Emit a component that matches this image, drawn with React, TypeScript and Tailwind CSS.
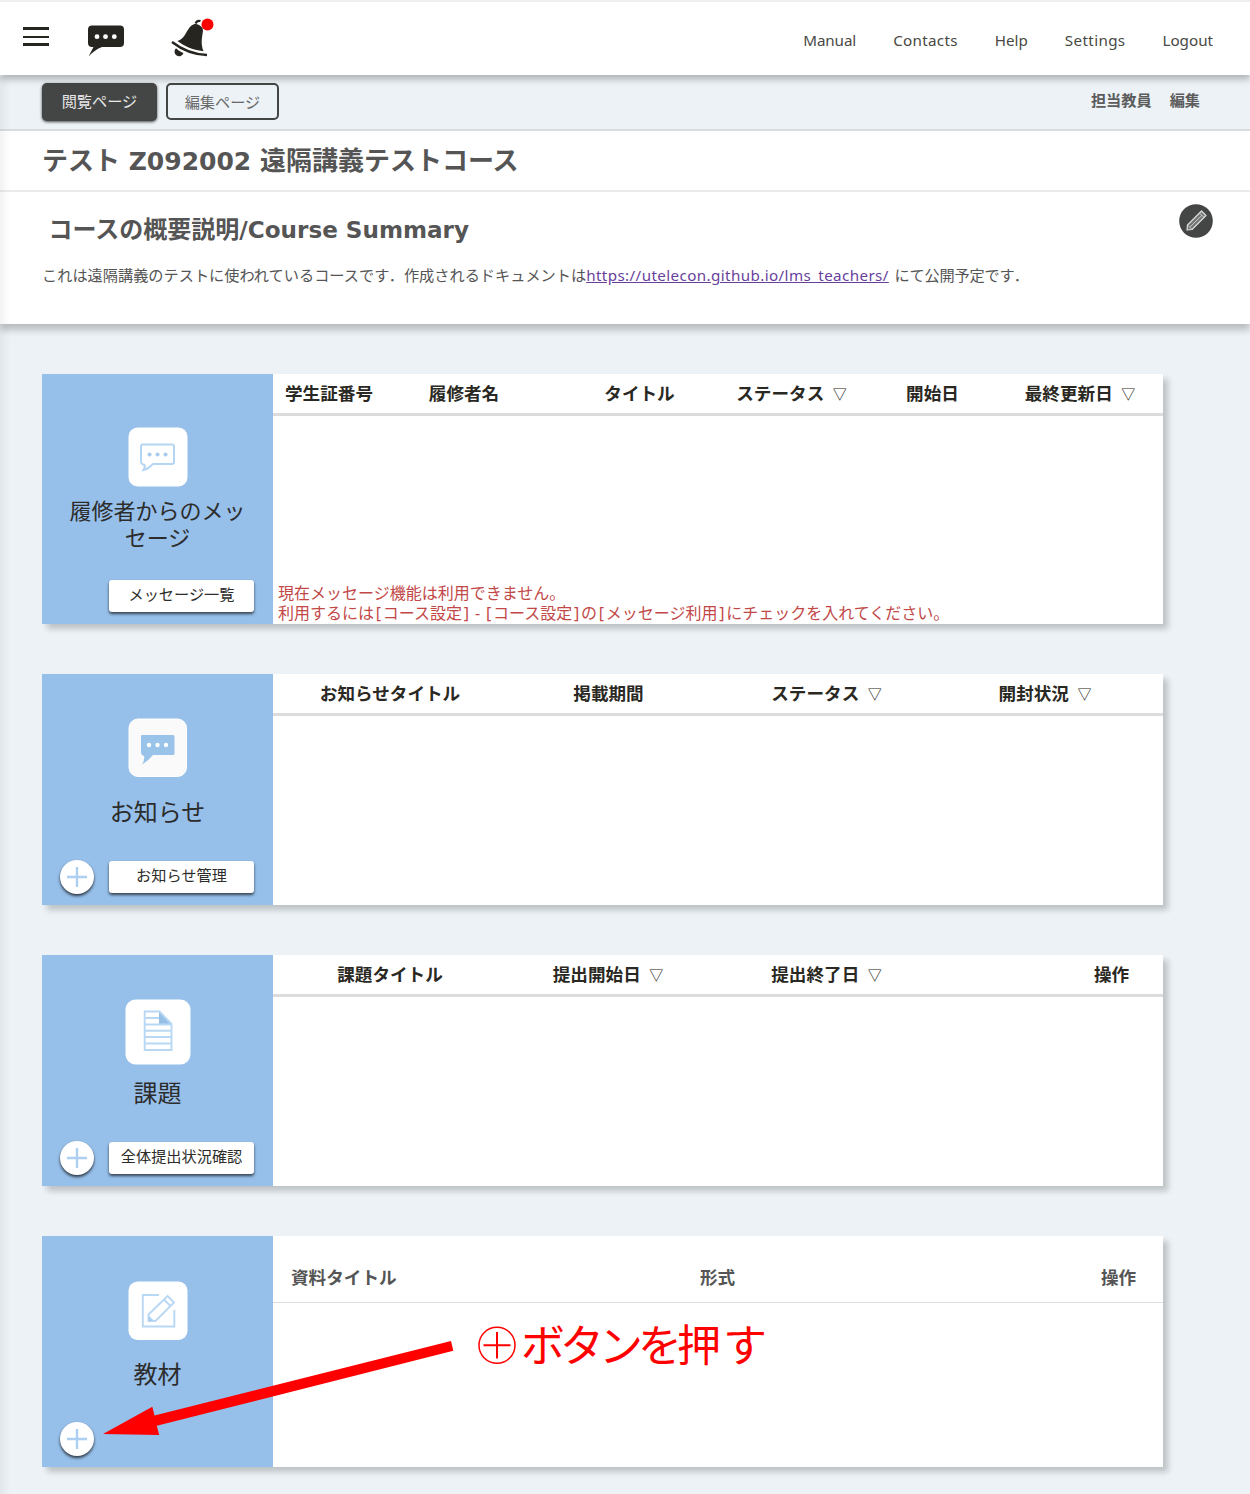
import React from "react";

type Column = { label: string; width: string; sort?: boolean };

const CJK = "font-['Noto_Sans','Noto_Sans_CJK_JP',sans-serif]";
const HEADING = "font-['DejaVu_Sans','Noto_Sans_CJK_JP',sans-serif]";

function Triangle() {
  return <span className="relative -top-px ml-[8.500px] font-['Noto_Sans_CJK_JP',sans-serif] text-[14px] font-medium">▽</span>;
}

function ChatIcon() {
  return (
    <svg className="h-[34px] w-[38px]" viewBox="0 0 38 34" fill="#262520">
      <path d="M5 .5h28q4 0 4 4v13.500q0 4-4 4H15C10 23.500 6 27 1.500 31.500 3 28.500 5 25 6.500 22H5q-4 0-4-4V4.500q0-4 4-4Z" />
      <circle cx="10" cy="11.700" r="2.400" fill="#fff" />
      <circle cx="18.500" cy="11.700" r="2.400" fill="#fff" />
      <circle cx="27.300" cy="11.700" r="2.400" fill="#fff" />
    </svg>
  );
}

function BellIcon() {
  return (
    <svg className="h-[42px] w-[46px]" viewBox="170 17 46 42">
      <path d="M195.500 23.500q1.500-3.500 5-2.500" fill="none" stroke="#262520" strokeWidth="2.200" />
      <path d="M202.500 28C199 24 195 22.500 191.500 25.500C186 30 186 38 177.500 41C184 46 192 50 203.500 51.200C200.500 44 202 37 203 31Z" fill="#262520" />
      <path d="M172 42C181 49 192 54.500 207 55" fill="none" stroke="#262520" strokeWidth="2.500" />
      <path d="M176 48.200Q181 52.500 183.500 52.900A4.600 4.600 0 1 1 176 48.200Z" fill="#262520" />
      <circle cx="207.500" cy="24.500" r="6" fill="#f00" />
    </svg>
  );
}

function MessageTile() {
  return (
    <svg className="size-[60px]" viewBox="0 0 60 60">
      <rect x=".5" y=".5" width="59" height="59" rx="9" fill="#fff" />
      <path d="M15 17.500h29q2 0 2 2V35q0 2-2 2H25Q20 42 15.500 43Q17.500 40 16.500 38Q13 37 13 35V19.500q0-2 2-2Z" fill="none" stroke="#b5d6f3" strokeWidth="2" />
      <g fill="#aacdee">
        <circle cx="21.500" cy="27.500" r="2.100" />
        <circle cx="29.500" cy="27.500" r="2.100" />
        <circle cx="37.500" cy="27.500" r="2.100" />
      </g>
    </svg>
  );
}

function NewsTile() {
  return (
    <svg className="size-[60px]" viewBox="0 0 60 60">
      <rect x="1" y="1" width="57.500" height="57.500" rx="9" fill="#fafafa" stroke="#fff" />
      <path d="M14 17h31q1.500 0 1.500 1.500v17q0 1.500-1.500 1.500H25Q20 43 14 46.500Q17 42 16 38Q13 37 13 35V18q0-1 1-1Z" fill="#9ac3ea" />
      <g fill="#fff">
        <circle cx="21" cy="27" r="2.200" />
        <circle cx="29.500" cy="27" r="2.200" />
        <circle cx="38" cy="27" r="2.200" />
      </g>
    </svg>
  );
}

function ReportTile() {
  return (
    <svg className="size-[66px]" viewBox="0 0 66 66">
      <rect x=".5" y=".5" width="65" height="65" rx="10" fill="#fff" />
      <path d="M34 12.500L46.500 25H34Z" fill="#96bfe8" />
      <path d="M19.700 12.500H34.500L46.500 25V51H19.700ZM19.700 19H34M19.700 25.500H46M19.700 31.700h26.800M19.700 38h26.800M19.700 44.500h26.800" fill="none" stroke="#b9d8f4" strokeWidth="1.900" />
    </svg>
  );
}

function MaterialTile() {
  return (
    <svg className="size-[60px]" viewBox="0 0 60 60">
      <rect x=".5" y=".5" width="59" height="58.500" rx="9" fill="#fff" />
      <g fill="none" stroke="#b9d8f4" strokeWidth="1.900">
        <path d="M31 14H14.800v31.500h31.500V29" />
        <path d="M39.500 15L46 21.500L27.500 40H20.500V33.500ZM36 18.500L42.500 25M20.500 35.500L25 40" />
      </g>
      <path d="M20.500 36L24.500 40h-4Z" fill="#a9cdef" />
    </svg>
  );
}

function PlusButton() {
  return (
    <button aria-label="追加" className="flex size-[34px] items-center justify-center rounded-full bg-white shadow-[0_2px_3px_rgba(0,0,0,.7)]">
      <svg className="size-[22px]" viewBox="0 0 22 22">
        <path d="M1 11h20M11 1v20" stroke="#add0f2" strokeWidth="2.400" />
      </svg>
    </button>
  );
}

function PencilButton() {
  return (
    <button aria-label="編集" className="size-[34px]">
      <svg viewBox="0 0 34 34" className="size-[34px]">
        <circle cx="17" cy="17" r="16.800" fill="#444645" />
        <path d="M22.500 7L27 11.500L13 25.500L8 26L8.500 21Z" fill="#747575" />
        <g fill="none" stroke="#dcdcdc" strokeWidth="1.200" strokeLinejoin="round">
          <path d="M22.500 7L27 11.500L13 25.500L8 26L8.500 21Z" />
          <path d="M20.500 9L25 13.500M11 23L23 11.200M8.500 21L13 25.500" strokeWidth=".8" />
        </g>
      </svg>
    </button>
  );
}

function SideButton({ label }: { label: string }) {
  return (
    <button className="h-[32px] w-[145px] rounded-[3px] bg-white pb-[3px] text-[15.200px] leading-[29px] text-[#2c2c28] shadow-[0_2px_3px_rgba(0,0,0,.65)]">
      {label}
    </button>
  );
}

function Bracketed({ children }: { children: string }) {
  return (
    <>
      <span className="px-[1.750px]">[</span>
      {children}
      <span className="px-[1.750px]">]</span>
    </>
  );
}

function Card({
  height,
  iconTop,
  icon,
  titleGap,
  title,
  titleClass,
  button,
  plus,
  children,
}: {
  height: string;
  iconTop: string;
  icon: React.ReactNode;
  titleGap: string;
  title: React.ReactNode;
  titleClass: string;
  button?: string;
  plus?: boolean;
  children: React.ReactNode;
}) {
  return (
    <section className={`flex w-[1121px] shadow-[5px_5px_6px_rgba(0,0,0,.2)] ${height}`}>
      <div className={`flex w-[231px] shrink-0 flex-col items-center bg-[#96bfe9] ${iconTop}`}>
        {icon}
        <h3 className={`text-center text-[#2c2c2c] ${titleGap} ${titleClass}`}>{title}</h3>
        <div className="mt-auto mb-[11px] flex h-[34px] w-full items-center pl-[18px]">
          {plus ? <PlusButton /> : <span className="w-[34px]" />}
          {button && (
            <span className="ml-[15px] flex">
              <SideButton label={button} />
            </span>
          )}
        </div>
      </div>
      <div className="flex flex-1 flex-col bg-white">{children}</div>
    </section>
  );
}

function HeaderRow({ columns }: { columns: Column[] }) {
  return (
    <div className="flex h-[42px] border-b-[3px] border-[#dcdcdc] text-[17.600px] leading-[38px] font-bold text-[#2a2822]">
      {columns.map((c, i) => (
        <div key={i} className={`shrink-0 text-center whitespace-nowrap ${c.width}`}>
          {c.label}
          {c.sort && <Triangle />}
        </div>
      ))}
    </div>
  );
}

export default function App() {
  return (
    <div className={`relative h-[1494px] w-[1250px] overflow-hidden bg-[#ecf2f6] text-[#555] ${CJK}`}>
      <header className="relative z-10 flex h-[75px] items-start border-t-2 border-[#efefef] bg-white pl-[23px] shadow-[0_4px_7px_rgba(0,0,0,.28)]">
        <div className="mt-[25px] flex h-[19px] w-[26px] flex-col justify-between">
          <span className="h-[3px] bg-[#262520]" />
          <span className="h-[2px] bg-[#262520]" />
          <span className="h-[3px] bg-[#262520]" />
        </div>
        <div className="mt-[22.500px] ml-[38px]">
          <ChatIcon />
        </div>
        <div className="mt-[15px] ml-[45px]">
          <BellIcon />
        </div>
        <nav className="mt-[26px] mr-[37px] ml-auto flex gap-[37px] text-[15.200px] leading-[24px] text-[#484844]">
          <a className="tracking-[-.1px]">Manual</a>
          <a className="tracking-[.3px]">Contacts</a>
          <a>Help</a>
          <a className="tracking-[.35px]">Settings</a>
          <a>Logout</a>
        </nav>
      </header>

      <div className="flex h-[56px] items-start border-b-2 border-[#d8dddd] pt-[8px] pl-[42px]">
        <button className="h-[38px] w-[115px] rounded-[5px] bg-[#444645] pb-[1px] text-[15.200px] leading-[35px] text-[#e8e8e8] shadow-[0_1px_3px_rgba(0,0,0,.7)]">閲覧ページ</button>
        <button className="ml-[9px] h-[37px] w-[113px] rounded-[5px] border-2 border-[#444645] text-[15.200px] leading-[32px] text-[#6a6a6a]">編集ページ</button>
        <div className="mt-[5px] mr-[50px] ml-auto flex gap-[18px] text-[15.200px] leading-[24px] font-bold text-[#5c5c5c]">
          <span>担当教員</span>
          <span>編集</span>
        </div>
      </div>

      <main>
        <div className="bg-white shadow-[0_6px_7px_rgba(0,0,0,.22)]">
          <h1 className={`h-[61px] border-b-2 border-[#ebebeb] pl-[42px] text-[26px] leading-[60px] font-bold text-[#555] ${HEADING}`}>
            テスト<span className="text-[25px]"> Z092002 </span>遠隔講義テストコース
          </h1>
          <div className="h-[132px] pl-[42px]">
            <div className="flex h-[67px] items-start justify-between pr-[37px]">
              <h2 className={`pt-[18px] pl-[6.500px] text-[24px] leading-[40px] font-bold ${HEADING}`}>
                コースの概要説明<span className="text-[23.100px]">/Course Summary</span>
              </h2>
              <span className="mt-[12px] flex">
                <PencilButton />
              </span>
            </div>
            <p className="text-[15.200px] leading-[32px] whitespace-nowrap">
              これは遠隔講義のテストに使われているコースです．作成されるドキュメントは
              <a className="tracking-[.390px] text-[#693f9c] underline">https://utelecon.github.io/lms_teachers/</a>
              <span className="ml-[2px] tracking-[-.2px]"> にて公開予定です．</span>
            </p>
          </div>
        </div>

        <div className="flex flex-col gap-[50px] pt-[50px] pl-[42px]">
          <Card height="h-[250px]" iconTop="pt-[53px]" icon={<MessageTile />} titleGap="mt-[10px]" titleClass="text-[22px] leading-[27px]" title={<>履修者からのメッ<br />セージ</>} button="メッセージ一覧">
            <HeaderRow
              columns={[
                { label: "学生証番号", width: "w-[112px]" },
                { label: "履修者名", width: "w-[158px]" },
                { label: "タイトル", width: "w-[193px]" },
                { label: "ステータス", width: "w-[111px]", sort: true },
                { label: "開始日", width: "w-[171px]" },
                { label: "最終更新日", width: "w-[124px]", sort: true },
              ]}
            />
            <p className="mt-auto pb-[1px] pl-[5px] text-[16px] leading-[20px] whitespace-nowrap text-[#c24848]">
              現在メッセージ機能は利用できません。
              <br />
              利用するには
              <Bracketed>コース設定</Bracketed>
              <span> - </span>
              <Bracketed>コース設定</Bracketed>の<Bracketed>メッセージ利用</Bracketed>
              にチェックを入れてください。
            </p>
          </Card>

          <Card height="h-[231px]" iconTop="pt-[44px]" icon={<NewsTile />} titleGap="mt-[18px]" titleClass="text-[24px] leading-[32px]" title="お知らせ" button="お知らせ管理" plus>
            <HeaderRow
              columns={[
                { label: "お知らせタイトル", width: "w-[234px]" },
                { label: "掲載期間", width: "w-[203px]" },
                { label: "ステータス", width: "w-[233px]", sort: true },
                { label: "開封状況", width: "w-[204px]", sort: true },
              ]}
            />
          </Card>

          <Card height="h-[231px]" iconTop="pt-[44px]" icon={<ReportTile />} titleGap="mt-[12px]" titleClass="text-[24px] leading-[32px]" title="課題" button="全体提出状況確認" plus>
            <HeaderRow
              columns={[
                { label: "課題タイトル", width: "w-[234px]" },
                { label: "提出開始日", width: "w-[202px]", sort: true },
                { label: "提出終了日", width: "w-[235px]", sort: true },
                { label: "", width: "w-[116px]" },
                { label: "操作", width: "w-[103px]" },
              ]}
            />
          </Card>

          <Card height="h-[231px]" iconTop="pt-[45px]" icon={<MaterialTile />} titleGap="mt-[17px]" titleClass="text-[24px] leading-[32px]" title="教材" plus>
            <div className="flex h-[67px] border-b border-[#dedede] pt-[26px] pl-[18px] text-[17.600px] leading-[30px] font-bold text-[#555]">
              <span className="w-[409px]">資料タイトル</span>
              <span className="w-[401px]">形式</span>
              <span>操作</span>
            </div>
          </Card>
        </div>
      </main>

      <div className="pointer-events-none absolute inset-y-0 left-0 z-20 mt-[77px] w-[10px] bg-linear-to-r from-black/[.05] to-transparent" />

      <div className="pointer-events-none absolute top-[1310px] left-[103px] flex h-[130px] w-[700px]">
        <svg className="h-[130px] w-[352px]" viewBox="103 1310 352 130">
          <path d="M103 1434L152.300 1406.700L154.500 1415.500L451 1341L453.300 1350.800L156.800 1425.800L159.200 1435Z" fill="#f00" />
        </svg>
        <svg aria-label="⊕" className="mt-[16px] ml-[22px] size-[40px]" viewBox="0 0 40 40" fill="none" stroke="#f00">
          <circle cx="20" cy="19.200" r="18" strokeWidth="1.500" />
          <path d="M6.500 19.200h27M20 6v26.500" strokeWidth="2" />
        </svg>
        <span className="mt-[3px] ml-[4px] text-[44px] leading-[64px] whitespace-nowrap text-[#f00]">
          <span className="tracking-[-5px]">ボタンを</span>
          <span className="tracking-[2px]">押</span>す
        </span>
      </div>
    </div>
  );
}
